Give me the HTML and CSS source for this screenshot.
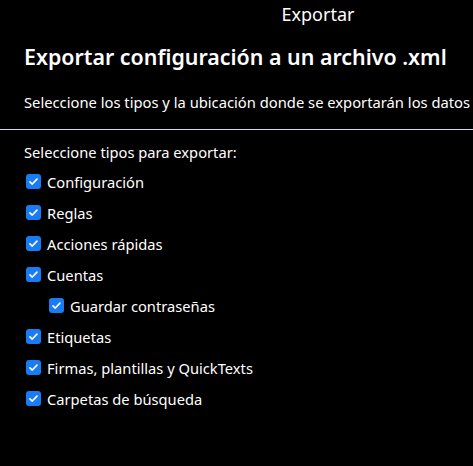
FILE: index.html
```html
<!DOCTYPE html>
<html lang="es">
<head>
<meta charset="utf-8">
<link rel="stylesheet" href="styles.css">
</head>
<body>
<div class="window">
  <div class="titlebar">Exportar</div>
  <h1 class="heading">Exportar configuración a un archivo .xml</h1>
  <p class="desc">Seleccione los tipos y la ubicación donde se exportarán los datos</p>
  <hr class="divider">
  <div class="options">
    <div class="label">Seleccione tipos para exportar:</div>
    <label class="opt"><span class="box"><svg viewBox="0 0 16 16"><path d="M4.2 8.3l2.5 2.4 5-5.2"/></svg></span>Configuración</label>
    <label class="opt"><span class="box"><svg viewBox="0 0 16 16"><path d="M4.2 8.3l2.5 2.4 5-5.2"/></svg></span>Reglas</label>
    <label class="opt"><span class="box"><svg viewBox="0 0 16 16"><path d="M4.2 8.3l2.5 2.4 5-5.2"/></svg></span>Acciones rápidas</label>
    <label class="opt"><span class="box"><svg viewBox="0 0 16 16"><path d="M4.2 8.3l2.5 2.4 5-5.2"/></svg></span>Cuentas</label>
    <label class="opt sub"><span class="box"><svg viewBox="0 0 16 16"><path d="M4.2 8.3l2.5 2.4 5-5.2"/></svg></span>Guardar contraseñas</label>
    <label class="opt"><span class="box"><svg viewBox="0 0 16 16"><path d="M4.2 8.3l2.5 2.4 5-5.2"/></svg></span>Etiquetas</label>
    <label class="opt"><span class="box"><svg viewBox="0 0 16 16"><path d="M4.2 8.3l2.5 2.4 5-5.2"/></svg></span>Firmas, plantillas y QuickTexts</label>
    <label class="opt"><span class="box"><svg viewBox="0 0 16 16"><path d="M4.2 8.3l2.5 2.4 5-5.2"/></svg></span>Carpetas de búsqueda</label>
  </div>
</div>
</body>
</html>
```
FILE: styles.css
```css
html, body {
  margin: 0;
  padding: 0;
  background: #000;
  color: #fff;
  font-family: "Noto Sans", "Open Sans", sans-serif;
}
.window {
  width: 473px;
  height: 466px;
  overflow: hidden;
  display: flex;
  flex-direction: column;
}
.titlebar {
  height: 29px;
  line-height: 29px;
  text-align: center;
  padding-left: 163px;
  font-size: 18px;
}
.heading {
  margin: 13px 0 0 24px;
  font-size: 21.4px;
  font-weight: 600;
  line-height: 30px;
  white-space: nowrap;
}
.desc {
  margin: 20px 0 0 24px;
  font-size: 14.75px;
  line-height: 20px;
  white-space: nowrap;
}
.divider {
  margin: 17px 0 0 0;
  border: 0;
  height: 1px;
  background: #ddd3f0;
}
.options {
  display: flex;
  flex-direction: column;
  padding: 12px 0 0 24px;
  font-size: 14.7px;
}
.label {
  line-height: 20px;
  margin-bottom: 4px;
}
.opt {
  display: flex;
  align-items: center;
  gap: 6px;
  height: 31px;
}
.opt.sub {
  padding-left: 23px;
}
.box {
  width: 15px;
  height: 15px;
  margin-left: 2px;
  border-radius: 3px;
  background: #1a7cf5;
  display: flex;
  align-items: center;
  justify-content: center;
}
.box svg {
  width: 15px;
  height: 15px;
  fill: none;
  stroke: #fff;
  stroke-width: 1.8;
  stroke-linecap: round;
  stroke-linejoin: round;
}
```
